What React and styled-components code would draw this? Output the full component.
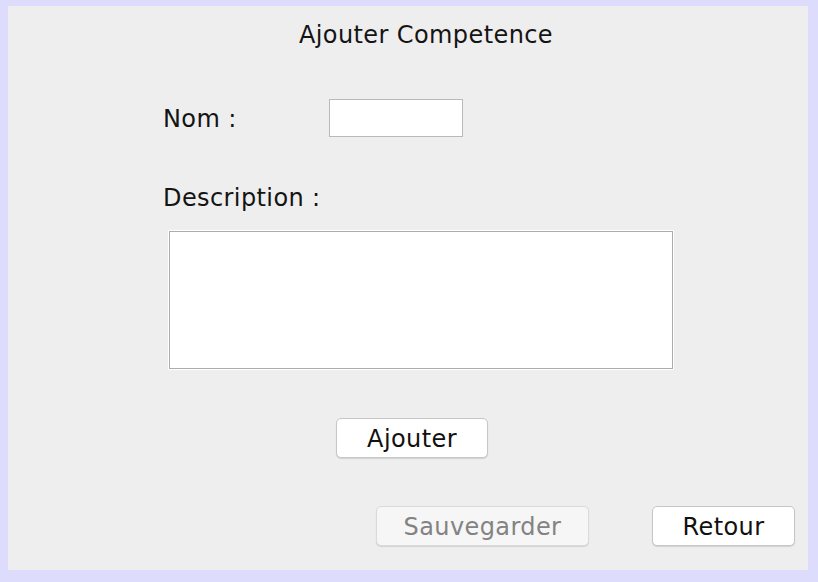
import React from 'react';
import styled, { createGlobalStyle } from 'styled-components';

const GlobalStyle = createGlobalStyle`
    html, body {
        margin: 0;
        padding: 0;
        background: #dedcfc;
        height: 100%;
    }
    body {
        font-family: "DejaVu Sans", "Liberation Sans", sans-serif;
        color: #141414;
    }
`

const Frame = styled.div`
    margin: 6px 0 0 8px;
    width: 800px;
    height: 564px;
    background: #eeeeee;
    display: flex;
    flex-direction: column;
    align-items: flex-start;
`

const Title = styled.div`
    align-self: stretch;
    margin-top: 15px;
    padding-left: 36px;
    height: 28px;
    line-height: 28px;
    font-size: 24px;
    letter-spacing: 0.4px;
    text-align: center;
`

const FieldRow = styled.div`
    margin-top: 50px;
    padding-left: 155px;
    display: flex;
    align-items: center;
    height: 38px;
`

const Label = styled.div`
    width: ${p => p.$width || 'auto'};
    font-size: 24px;
    line-height: 28px;
    letter-spacing: 0.4px;
    padding-top: ${p => p.$nudge || 0}px;
`

const TextInput = styled.input`
    box-sizing: border-box;
    width: 134px;
    height: 38px;
    border: 1px solid #b9b9b9;
    background: #ffffff;
    outline: none;
    margin: 0;
`

const DescLabel = styled(Label)`
    margin-top: 47px;
    margin-left: 155px;
`

const TextArea = styled.textarea`
    box-sizing: border-box;
    margin: 19px 0 0 161px;
    width: 504px;
    height: 138px;
    border: 1px solid #acacac;
    background: #ffffff;
    box-shadow: 0 0 0 1px #ffffff;
    resize: none;
    outline: none;
    padding: 0;
`

const Button = styled.button`
    box-sizing: border-box;
    width: ${p => p.$width}px;
    height: 40px;
    margin: 0;
    padding: 2px 0 0;
    border: 1px solid ${p => p.disabled ? '#dadada' : '#c6c6c6'};
    border-radius: 5px;
    background: ${p => p.disabled ? '#f6f6f6' : '#ffffff'};
    box-shadow: 0 1px 1px rgba(0, 0, 0, 0.12);
    font-family: "DejaVu Sans", "Liberation Sans", sans-serif;
    font-size: 24px;
    letter-spacing: 0.4px;
    color: ${p => p.disabled ? '#838383' : '#111111'};
`

const CenterAction = styled.div`
    margin: 49px 0 0 328px;
`

const Footer = styled.div`
    margin-top: 48px;
    padding-left: 368px;
    display: flex;
    gap: 63px;
`

export default function App() {
    return (
        <>
            <GlobalStyle />
            <Frame>
                <Title>Ajouter Competence</Title>
                <FieldRow>
                    <Label $width="166px" $nudge={2}>Nom :</Label>
                    <TextInput type="text" />
                </FieldRow>
                <DescLabel>Description :</DescLabel>
                <TextArea />
                <CenterAction>
                    <Button $width={152}>Ajouter</Button>
                </CenterAction>
                <Footer>
                    <Button $width={213} disabled>Sauvegarder</Button>
                    <Button $width={143}>Retour</Button>
                </Footer>
            </Frame>
        </>
    );
}
